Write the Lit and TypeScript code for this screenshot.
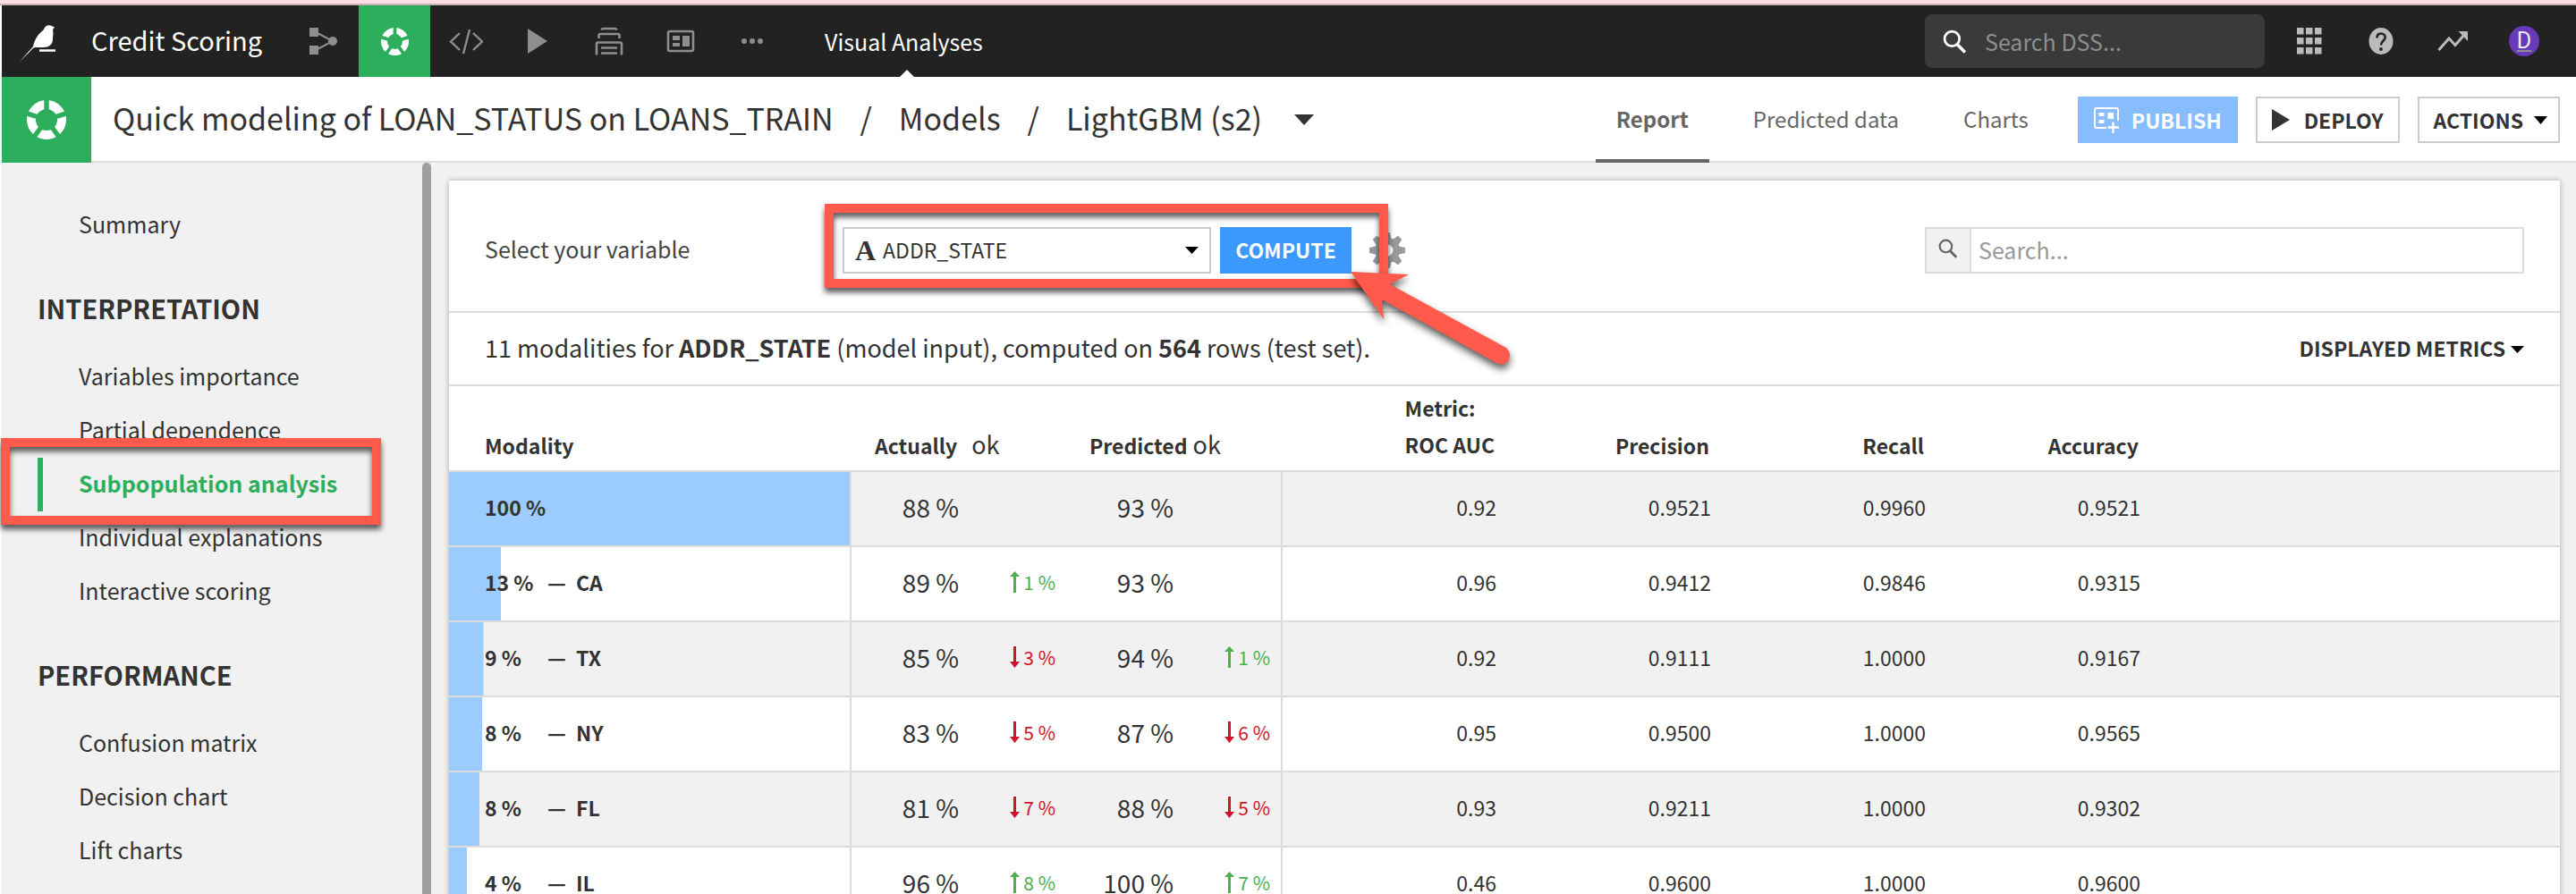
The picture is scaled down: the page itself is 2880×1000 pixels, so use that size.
import { LitElement, html, css, svg, nothing } from "lit";
import { customElement, property } from "lit/decorators.js";
import { classMap } from "lit/directives/class-map.js";
import { styleMap } from "lit/directives/style-map.js";

interface ModalityRow {
  share: number;
  bar: number;
  name?: string;
  actual: number;
  actualDelta?: number;
  predicted: number;
  predictedDelta?: number;
  metrics: string[];
}

const ROWS: ModalityRow[] = [
  { share: 100, bar: 100, actual: 88, predicted: 93, metrics: ["0.92", "0.9521", "0.9960", "0.9521"] },
  { share: 13, bar: 13, name: "CA", actual: 89, actualDelta: 1, predicted: 93, metrics: ["0.96", "0.9412", "0.9846", "0.9315"] },
  { share: 9, bar: 8.6, name: "TX", actual: 85, actualDelta: -3, predicted: 94, predictedDelta: 1, metrics: ["0.92", "0.9111", "1.0000", "0.9167"] },
  { share: 8, bar: 8.3, name: "NY", actual: 83, actualDelta: -5, predicted: 87, predictedDelta: -6, metrics: ["0.95", "0.9500", "1.0000", "0.9565"] },
  { share: 8, bar: 7.7, name: "FL", actual: 81, actualDelta: -7, predicted: 88, predictedDelta: -5, metrics: ["0.93", "0.9211", "1.0000", "0.9302"] },
  { share: 4, bar: 4.5, name: "IL", actual: 96, actualDelta: 8, predicted: 100, predictedDelta: 7, metrics: ["0.46", "0.9600", "1.0000", "0.9600"] },
];

/* Five ring segments separated by even gaps, on a 44-unit square. */
const ring = (size: number) => html`<svg width=${size} height=${size} viewBox="0 0 44 44" aria-hidden="true">
  <circle cx="22" cy="22" r="17" fill="none" stroke="#fff" stroke-width="10" />
  ${[0, 72, 144, 216, 288].map(
    (a) => svg`<path d="M22 14V-2" stroke="#2cae5c" stroke-width="5.4" transform="rotate(${a} 22 22)" />`
  )}
</svg>`;

const caret = (w: number, h: number, color = "#000") => html`<svg class="caret" width=${w} height=${h} viewBox="0 0 14 8" preserveAspectRatio="none" aria-hidden="true"><path d="M0 0h14L7 8z" fill=${color} /></svg>`;

const magnifier = (size: number, color: string) => html`<svg width=${size} height=${size} viewBox="0 0 26 26" aria-hidden="true">
  <circle cx="10" cy="10" r="8" fill="none" stroke=${color} stroke-width="2.600" />
  <path d="M15.500 16l8.500 8.500" stroke=${color} stroke-width="3.400" />
</svg>`;

const FONT = css`"Noto Sans CJK SC", "Noto Sans", sans-serif`;

@customElement("top-nav")
export class TopNav extends LitElement {
  static styles = css`
    :host { display: block; font-family: ${FONT}; }
    .bar { display: flex; height: 80px; background: #222; color: #fff; }
    .logo { display: flex; align-items: center; padding: 6px 40px 0 20px; }
    .project { display: flex; align-items: center; width: 219px; padding-bottom: 4px; font-size: 29px; line-height: 40px; color: #fff; text-decoration: none; white-space: nowrap; }
    .icon { display: flex; align-items: center; justify-content: center; width: 80px; color: #8e8e8e; }
    .light { color: #bbb; }
    .on { background: #2cae5c; }
    .section { position: relative; display: flex; align-items: center; margin-left: 41px; padding-right: 8px; font-size: 25px; color: #fff; text-decoration: none; white-space: nowrap; }
    .section::after { content: ""; position: absolute; left: 50%; bottom: 0; margin-left: -8px; border: 8px solid transparent; border-top: 0; border-bottom-color: #fff; }
    .search { display: flex; align-items: center; gap: 20px; box-sizing: border-box; width: 380px; margin: 10px 10px 10px auto; padding: 0 20px; background: #3a3a3a; border-radius: 8px; }
    .search input { flex: 1; min-width: 0; padding: 0; border: 0; outline: 0; background: none; color: #fff; font: 25px/40px ${FONT}; }
    .search input::placeholder { color: #8e8e8e; opacity: 1; }
    .end { display: flex; padding-right: 18px; }
    .avatar { display: flex; align-items: center; justify-content: center; width: 34px; height: 34px; border-radius: 50%; background: #673ab7; color: #ece6f5; font: 25px/34px Roboto, sans-serif; }
  `;

  render() {
    return html`<nav class="bar">
      <a class="logo" href="#" aria-label="Home">
        <svg width="40" height="42" viewBox="0 0 40 42">
          <path d="M0 41L15 24C17 15 21 10 27 5C28 1 32-1 36 1L39 2.500L37 5C38 10 37 12 37 16C37 22 32 25 27 25H18C15 25 14 27 12 29Z" fill="#fff" />
          <path d="M22 28.500H40" stroke="#fff" stroke-width="2.500" />
        </svg>
      </a>
      <a class="project" href="#">Credit Scoring</a>
      <a class="icon" href="#" aria-label="Flow">
        <svg width="32" height="32" viewBox="0 0 32 32"><g fill="#8e8e8e"><path d="M1 1h10v10H1zM1 21h10v10H1z" /><circle cx="27" cy="16" r="5" /></g><path d="M8 6l19 10L8 26" fill="none" stroke="#8e8e8e" stroke-width="2" /></svg>
      </a>
      <a class="icon on" href="#" aria-label="Analyses">${ring(31)}</a>
      <a class="icon" href="#" aria-label="Code">
        <svg width="38" height="30" viewBox="0 0 38 30" fill="none" stroke="#8e8e8e" stroke-width="2.400"><path d="M12 6L2 15.500L12 25M27 6l10 9.500L27 25M23 2l-7 27" /></svg>
      </a>
      <a class="icon" href="#" aria-label="Jobs"><svg width="22" height="28" viewBox="0 0 22 28"><path d="M0 0l22 14L0 28z" fill="#8e8e8e" /></svg></a>
      <a class="icon" href="#" aria-label="Automation">
        <svg width="32" height="32" viewBox="0 0 32 32" fill="none" stroke="#8e8e8e" stroke-width="2.600"><path d="M7.500 3.500Q8 2 10 2H22Q24 2 24.500 3.500M4.500 13V9.500Q4.500 8 6 8H26Q27.500 8 27.500 9.500V13M2 31.500V19Q2 17.500 3.500 17.500H28.500Q30 17.500 30 19V31.500M7 23.500H25M7 29.500H25" /></svg>
      </a>
      <a class="icon" href="#" aria-label="Dashboards">
        <svg width="32" height="26" viewBox="0 0 32 26"><rect x="2" y="2" width="28" height="22" rx="2" fill="none" stroke="#8e8e8e" stroke-width="2.600" /><path d="M7 7h8v5H7zM7 15h8v4H7zM18 7h8v12h-8z" fill="#8e8e8e" /></svg>
      </a>
      <a class="icon" href="#" aria-label="More"><svg width="26" height="6" viewBox="0 0 26 6" fill="#8e8e8e"><circle cx="4" cy="3" r="3" /><circle cx="13" cy="3" r="3" /><circle cx="22" cy="3" r="3" /></svg></a>
      <a class="section" href="#">Visual Analyses</a>
      <label class="search">${magnifier(27, "#fff")}<input type="text" placeholder="Search DSS..." aria-label="Search DSS" /></label>
      <div class="end">
        <a class="icon light" href="#" aria-label="Applications">
          <svg width="28" height="30" viewBox="0 0 28 30" fill="#bbb">${[0, 10, 20].map((x) => [0, 11, 22].map((y) => svg`<rect x=${x} y=${y} width="7.500" height="7.500" />`))}</svg>
        </a>
        <a class="icon light" href="#" aria-label="Help">
          <svg width="28" height="30" viewBox="0 0 28 30"><ellipse cx="14" cy="15" rx="13.500" ry="15" fill="#bbb" /><path d="M9.500 11.500C9.500 8 11.500 6.500 14 6.500C17 6.500 18.700 8.500 18.700 11C18.700 14.500 14 14.500 14 19.500" fill="none" stroke="#222" stroke-width="2.600" /><circle cx="14" cy="24" r="1.900" fill="#222" /></svg>
        </a>
        <a class="icon light" href="#" aria-label="Activity">
          <svg width="34" height="24" viewBox="0 0 34 24"><path d="M1.500 22L13 9l7 7.500L30 5" fill="none" stroke="#bbb" stroke-width="3" /><path d="M23.500 1H34v11z" fill="#bbb" /></svg>
        </a>
        <a class="icon" href="#" aria-label="Profile"><span class="avatar">D</span></a>
      </div>
    </nav>`;
  }
}

@customElement("model-header")
export class ModelHeader extends LitElement {
  static styles = css`
    :host { display: block; font-family: ${FONT}; color: #333; }
    .bar { display: flex; height: 96px; box-sizing: border-box; background: #fff; box-shadow: inset 0 -2px #dcdcdc; }
    .badge { display: flex; align-items: center; justify-content: center; width: 100px; background: #2cae5c; }
    .crumbs { display: flex; align-items: center; gap: 30px; padding: 0 0 4px 24px; font-size: 34px; line-height: 48px; white-space: nowrap; }
    .crumbs a { color: inherit; text-decoration: none; }
    .crumbs .caret { margin: 4px 0 0 6px; }
    .tabs { display: flex; gap: 26px; margin-left: auto; font-size: 24px; }
    .tab { display: flex; align-items: center; padding: 0 23px 4px; color: #666; text-decoration: none; white-space: nowrap; }
    .active { font-weight: 700; box-shadow: inset 0 -4px #666; }
    .actions { display: flex; align-items: center; gap: 20px; padding: 0 18px 0 32px; }
    button { display: flex; align-items: center; justify-content: center; box-sizing: border-box; height: 52px; padding: 0 16px; gap: 16px; border: 2px solid #ccc; background: #fff; color: #333; font: 700 23px/32px ${FONT}; white-space: nowrap; }
    .publish { gap: 14px; border-color: #87bdff; background: #87bdff; color: #fff; }
    .menu { gap: 12px; padding: 0 12px 0 16px; }
  `;

  render() {
    return html`<header class="bar">
      <div class="badge">${ring(44)}</div>
      <div class="crumbs">
        <a href="#">Quick modeling of LOAN_STATUS on LOANS_TRAIN</a><span>/</span>
        <a href="#">Models</a><span>/</span>
        <a href="#">LightGBM (s2)</a>
        ${caret(22, 12, "#333")}
      </div>
      <nav class="tabs">
        <a class="tab active" href="#">Report</a>
        <a class="tab" href="#">Predicted data</a>
        <a class="tab" href="#">Charts</a>
      </nav>
      <div class="actions">
        <button class="publish">
          <svg width="28" height="30" viewBox="0 0 28 30" fill="none" stroke="#fff" stroke-width="2"><path d="M14 24H3Q1 24 1 22V4Q1 2 3 2H25Q27 2 27 4V16" /><path d="M21.500 17.500V30M15.500 23.500H28" stroke-width="2.400" /><path d="M5.500 7h6v4h-6zM5.500 15h6v4h-6zM15.500 7h6.500v7h-6.500z" fill="#fff" stroke="none" /></svg>
          PUBLISH
        </button>
        <button><svg width="20" height="24" viewBox="0 0 20 24"><path d="M0 0l20 12L0 24z" fill="#333" /></svg>DEPLOY</button>
        <button class="menu">ACTIONS ${caret(15, 9)}</button>
      </div>
    </header>`;
  }
}

@customElement("report-sidebar")
export class ReportSidebar extends LitElement {
  static styles = css`
    :host { display: block; position: relative; font-family: ${FONT}; color: #333; }
    .list { padding-top: 40px; }
    .item { display: block; margin-left: 40px; padding: 0 0 4px 46px; font-size: 25px; line-height: 56px; color: #333; text-decoration: none; white-space: nowrap; }
    .current { padding-left: 40px; border-left: 6px solid #2cae5c; color: #2cae5c; font-weight: 700; }
    .heading { margin: 0; padding: 42px 0 28px 40px; font-size: 29px; line-height: 40px; }
    .outline { position: absolute; left: -1px; top: 308px; width: 425px; height: 97px; box-sizing: border-box; border: 10px solid #ff5a4b; filter: drop-shadow(0 5px 3px rgba(0, 0, 0, 0.65)); pointer-events: none; }
  `;

  render() {
    const item = (label: string, current = false) =>
      html`<a href="#" class=${classMap({ item: true, current })}>${label}</a>`;
    return html`<nav class="list">
        ${item("Summary")}
        <h2 class="heading">INTERPRETATION</h2>
        ${item("Variables importance")} ${item("Partial dependence")}
        ${item("Subpopulation analysis", true)}
        ${item("Individual explanations")} ${item("Interactive scoring")}
        <h2 class="heading">PERFORMANCE</h2>
        ${item("Confusion matrix")} ${item("Decision chart")} ${item("Lift charts")}
      </nav>
      <div class="outline"></div>`;
  }
}

@customElement("delta-value")
export class DeltaValue extends LitElement {
  @property({ type: Number }) value = 0;

  static styles = css`
    :host { display: flex; align-items: center; justify-content: flex-end; font-size: 21px; line-height: 32px; }
    .up { color: #4caf50; }
    .down { color: #d0142b; }
    .delta { display: inline-flex; align-items: center; gap: 4px; }
  `;

  render() {
    const up = this.value > 0;
    return html`<span class="delta ${up ? "up" : "down"}">
      <svg width="11" height="24" viewBox="0 0 11 24" aria-hidden="true">
        <path d=${up ? "M5.500 0L11 6H7v18H4V6H0z" : "M5.500 24L11 17H7V0H4v17H0z"} fill="currentColor" />
      </svg>${Math.abs(this.value)} %</span>`;
  }
}

@customElement("subpopulation-card")
export class SubpopulationCard extends LitElement {
  static styles = css`
    :host { display: block; background: #fff; color: #333; font-family: ${FONT}; box-shadow: 0 0 6px rgba(0, 0, 0, 0.3); }
    .toolbar { display: flex; align-items: center; box-sizing: border-box; height: 148px; padding: 10px 40px 0; border-bottom: 2px solid #dcdcdc; }
    .label { width: 400px; padding-bottom: 4px; font-size: 25px; line-height: 40px; color: #444; }
    .picker { position: relative; display: flex; align-items: center; gap: 10px; }
    .select { display: flex; align-items: center; box-sizing: border-box; width: 412px; height: 52px; padding: 0 12px; gap: 8px; border: 2px solid #ccc; }
    .type { font: 700 32px/40px "Liberation Serif", serif; }
    .select select { flex: 1; min-width: 0; appearance: none; padding: 0 0 2px; border: 0; outline: 0; background: none; color: #333; font: 23px/40px ${FONT}; }
    .compute { height: 52px; width: 147px; padding: 0 0 2px; border: 0; background: #3b99fe; color: #fff; font: 700 23px/32px ${FONT}; }
    .gear { display: flex; margin-left: 10px; padding: 0; border: 0; background: none; }
    .outline { position: absolute; left: -20px; top: -26px; width: 630px; height: 94px; box-sizing: border-box; border: 10px solid #ff5a4b; filter: drop-shadow(0 5px 3px rgba(0, 0, 0, 0.65)); pointer-events: none; }
    .arrow { position: absolute; left: 560px; top: 42px; overflow: visible; filter: drop-shadow(0 5px 4px rgba(0, 0, 0, 0.65)); pointer-events: none; }
    .search { display: flex; box-sizing: border-box; width: 670px; height: 52px; margin-left: auto; border: 2px solid #dcdcdc; }
    .addon { display: flex; align-items: center; justify-content: center; box-sizing: border-box; width: 50px; padding-bottom: 4px; border-right: 2px solid #dcdcdc; background: #f1f1f1; }
    .search input { flex: 1; min-width: 0; padding: 0 8px 2px; border: 0; outline: 0; background: none; font: 25px/40px ${FONT}; }
    .search input::placeholder { color: #999; opacity: 1; }
    .summary { display: flex; align-items: center; justify-content: space-between; box-sizing: border-box; height: 82px; padding: 0 40px 2px; border-bottom: 2px solid #dcdcdc; }
    .sentence { margin: 0; font-size: 27px; line-height: 40px; }
    .metrics { display: flex; align-items: center; gap: 6px; padding: 0; border: 0; background: none; color: #333; font: 700 23px/40px ${FONT}; }
    .metrics .caret { margin-top: 4px; }
    table { width: 100%; table-layout: fixed; border-collapse: separate; border-spacing: 0; }
    .c-modality { width: 450px; }
    .c-actual { width: 240px; }
    .c-predicted { width: 242px; }
    .c-auc { width: 239px; }
    .c-metric { width: 240px; }
    th, td { height: 78px; padding: 0 0 4px; border-bottom: 2px solid #dcdcdc; font-size: 23px; line-height: 32px; text-align: right; white-space: nowrap; }
    thead th { height: 86px; padding: 0 2px 8px 0; line-height: 40px; vertical-align: bottom; font-weight: 700; }
    th.left { padding-left: 40px; text-align: left; }
    .modality { border-right: 2px solid #dcdcdc; background: linear-gradient(#9ccbfe, #9ccbfe) no-repeat; background-clip: padding-box; background-origin: padding-box; background-size: var(--bar) 100%; }
    .inside { display: flex; }
    .share { width: 70px; }
    .dash { width: 32px; }
    .pair { display: grid; grid-template-columns: 120px 108px; font-size: 28px; }
    .divider { border-right: 2px solid #dcdcdc; }
    tbody tr:nth-child(odd) { background: #f1f1f1; }
    th.outcome { padding-left: 26px; text-align: left; }
    .class { margin-left: 16px; font-size: 27px; font-weight: 400; }
    .tight { margin-left: 6px; }
    .two { display: inline-block; line-height: 41px; text-align: left; }
  `;

  private cell(value: number, delta?: number) {
    return html`<div class="pair"><span>${value} %</span>${delta === undefined
      ? nothing
      : html`<delta-value .value=${delta}></delta-value>`}</div>`;
  }

  render() {
    return html`
      <div class="toolbar">
        <label class="label" for="variable">Select your variable</label>
        <div class="picker">
          <div class="select">
            <span class="type" aria-hidden="true">A</span>
            <select id="variable"><option>ADDR_STATE</option></select>
            ${caret(15, 8)}
          </div>
          <button class="compute">COMPUTE</button>
          <button class="gear" aria-label="Settings">
            <svg width="40" height="40" viewBox="0 0 40 40">
              ${[0, 45, 90, 135].map((a) => svg`<path d="M17 0h6l1.500 7v26l-1.500 7h-6L15.500 33V7z" fill="#999" transform="rotate(${a} 20 20)" />`)}
              <circle cx="20" cy="20" r="14" fill="#999" /><circle cx="20" cy="20" r="6.500" fill="#fff" />
            </svg>
          </button>
          <div class="outline"></div>
          <svg class="arrow" width="200" height="120" viewBox="0 0 200 120"><path d="M8 8L73 11L52 22L182 93Q189 100 184 108Q179 114 171 110L43 39L45 61Z" fill="#ff5a4b" /></svg>
        </div>
        <div class="search">
          <label class="addon" for="filter">${magnifier(22, "#666")}</label>
          <input id="filter" type="text" placeholder="Search..." aria-label="Search modalities" />
        </div>
      </div>
      <div class="summary">
        <p class="sentence">11 modalities for <b>ADDR_STATE</b> (model input), computed on <b>564</b> rows (test set).</p>
        <button class="metrics">DISPLAYED METRICS ${caret(15, 8)}</button>
      </div>
      <table>
        <colgroup>
          <col class="c-modality" /><col class="c-actual" /><col class="c-predicted" /><col class="c-auc" />
          <col class="c-metric" /><col class="c-metric" /><col class="c-metric" /><col />
        </colgroup>
        <thead>
          <tr>
            <th class="left">Modality</th>
            <th class="outcome">Actually<span class="class">ok</span></th>
            <th class="outcome">Predicted<span class="class tight">ok</span></th>
            <th><span class="two">Metric:<br />ROC AUC</span></th>
            <th>Precision</th>
            <th>Recall</th>
            <th>Accuracy</th>
            <th></th>
          </tr>
        </thead>
        <tbody>
          ${ROWS.map(
            (r) => html`<tr>
              <th class="left modality" scope="row" style=${styleMap({ "--bar": `${r.bar}%` })}>
                <div class="inside"><span class="share">${r.share} %</span>${r.name
                  ? html`<span class="dash">—</span><span>${r.name}</span>`
                  : nothing}</div>
              </th>
              <td>${this.cell(r.actual, r.actualDelta)}</td>
              <td class="divider">${this.cell(r.predicted, r.predictedDelta)}</td>
              ${r.metrics.map((m) => html`<td>${m}</td>`)}
              <td></td>
            </tr>`
          )}
        </tbody>
      </table>
    `;
  }
}

@customElement("app-root")
export class AppRoot extends LitElement {
  static styles = css`
    :host { display: block; }
    .page { display: flex; flex-direction: column; height: 100vh; box-sizing: border-box; padding-left: 2px; overflow: hidden; background: linear-gradient(to right, #fff 2px, #f1f1f1 2px); }
    .strip { flex: none; height: 4px; margin-left: -2px; background: #ffdfe5; border-bottom: 2px solid #c5b3b6; }
    .body { flex: 1; min-height: 0; display: flex; }
    .side { flex: none; width: 470px; }
    .thumb { flex: none; width: 10px; border-radius: 5px 5px 0 0; background: #9e9e9e; }
    .main { flex: 1; min-width: 0; padding: 20px 18px 0 20px; }
  `;

  render() {
    return html`<div class="page">
      <div class="strip"></div>
      <top-nav></top-nav>
      <model-header></model-header>
      <div class="body">
        <report-sidebar class="side"></report-sidebar>
        <div class="thumb"></div>
        <main class="main"><subpopulation-card></subpopulation-card></main>
      </div>
    </div>`;
  }
}
